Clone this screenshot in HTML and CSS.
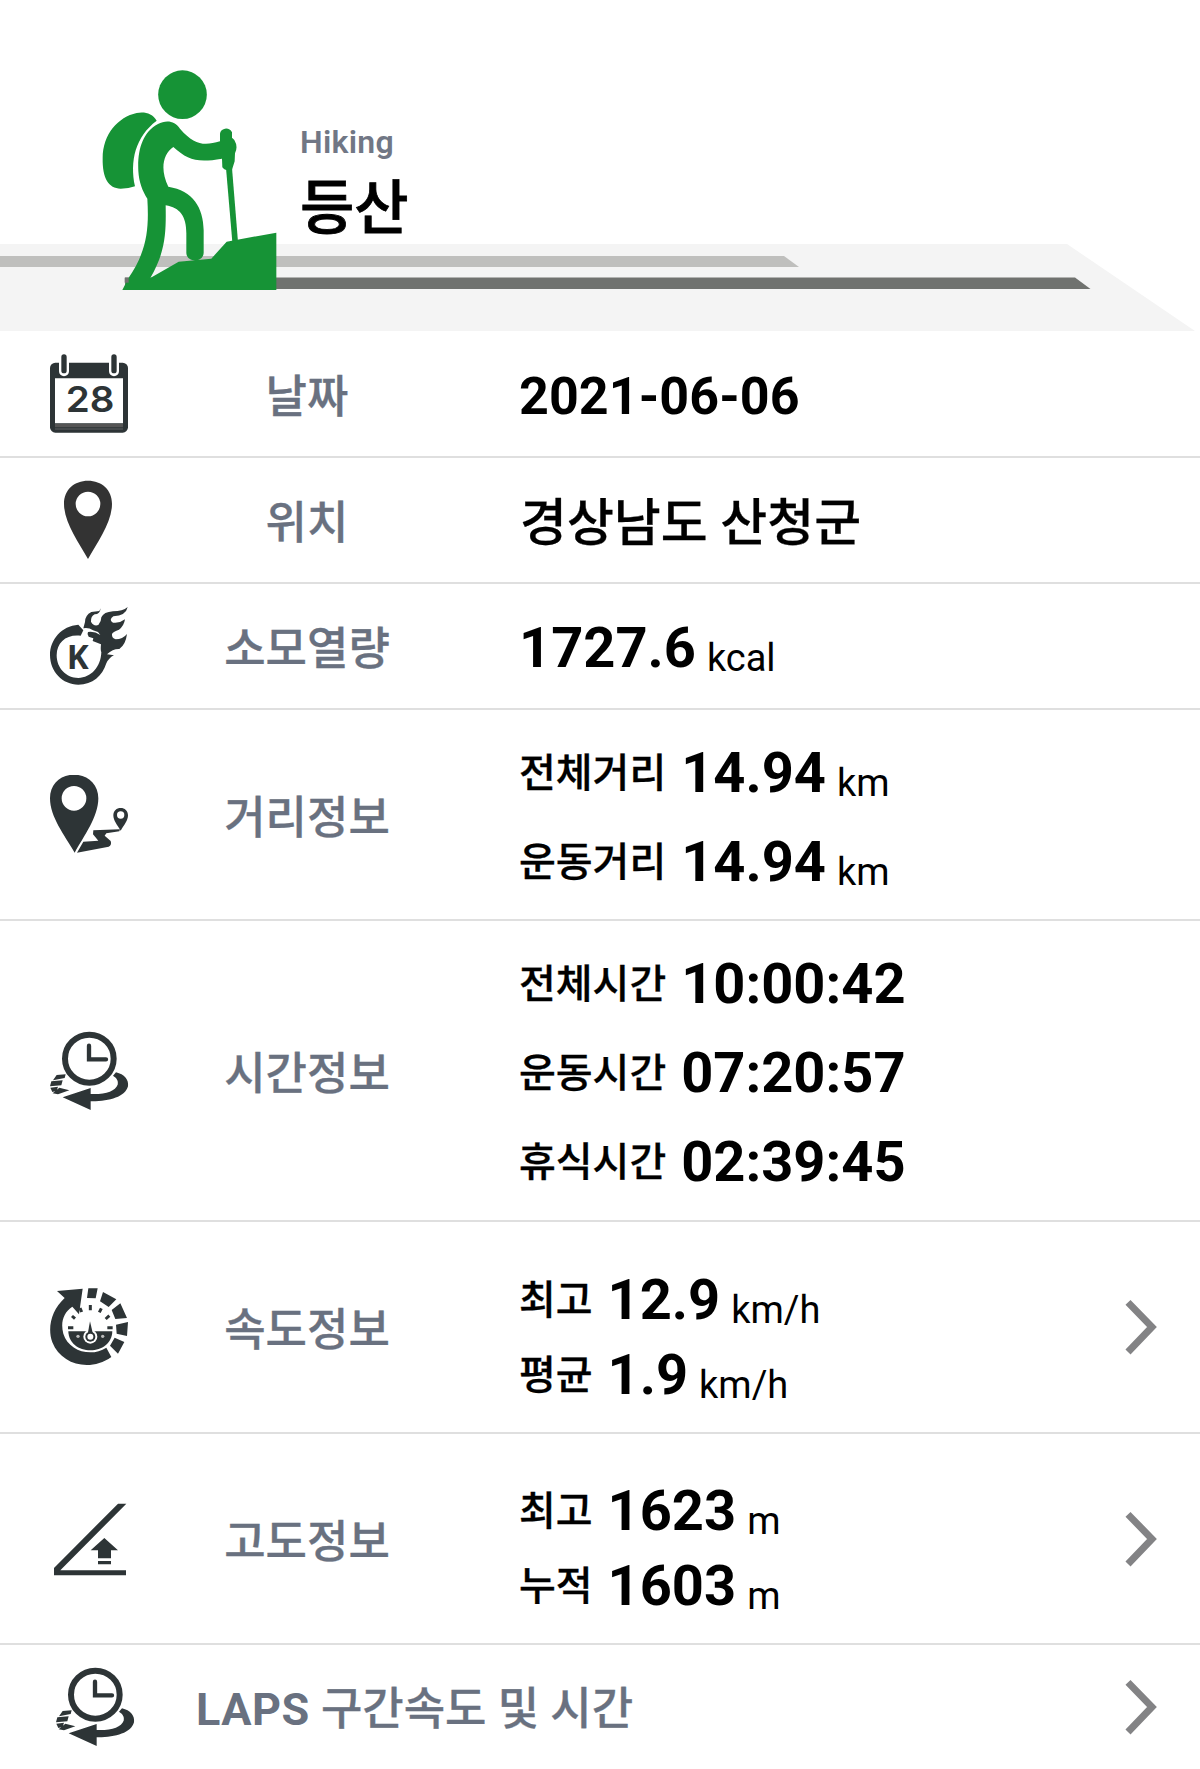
FILE: index.html
```html
<!DOCTYPE html>
<html lang="ko">
<head>
<meta charset="utf-8">
<title>등산 기록</title>
<link rel="stylesheet" href="styles.css">
</head>
<body>
<svg class="defs" width="0" height="0" aria-hidden="true">
  <symbol id="lap-clock" viewBox="60 60 240 240">
    <ellipse cx="178" cy="143" rx="73" ry="72" fill="none" stroke="#2d3436" stroke-width="18"/>
    <path d="M177 104V145H228" fill="none" stroke="#2d3436" stroke-width="13" stroke-linecap="round"/>
    <path d="M258 184C283 190 297 206 294 226C286 258 236 272 182 271V297L98 259L182 231V249C226 251 256 240 263 221C266 209 260 201 249 194Z" fill="#2d3436"/>
    <path d="M80 192L107 190L104 201L69 208ZM64 211L98 208L94 223L60 226ZM61 230L84 227L80 239L67 243ZM88 230L118 238L84 250L68 247Z" fill="#2d3436"/>
  </symbol>
  <symbol id="chevron" viewBox="70 50 110 180">
    <path d="M83 66L155 140L83 215" transform="translate(5 0)" fill="none" stroke="#838385" stroke-width="21"/>
  </symbol>
</svg>
<main class="record">
  <header class="hero">
    <svg class="scene" viewBox="0 0 1200 331">
      <path d="M0 244H1067L1195 331H0Z" fill="#f4f4f4"/>
      <path d="M0 256H784L799 267H0Z" fill="#bfbfbd"/>
      <path d="M125 277.500H1075L1090.500 289H125Z" fill="#70726f"/>
      <g transform="translate(80 50) scale(.33333)" fill="#169336">
        <circle cx="307.500" cy="134" r="73"/>
        <path d="M230 212C218 190 193 184 170 189C115 201 68 252 68 325C67 385 86 416 122 416Q147 416 165 409C149 333 166 260 230 212Z"/>
        <path d="M300 236C284 211 257 210 234 222C186 248 172 303 175 363C177 397 187 422 202 446C207 533 203 600 145 685L127 720H589V548L440 575L394 626L296 635L211 684C259 602 258 541 257 466C300 473 319 499 319 550V609C320 638 370 640 371 608V541C370 472 339 422 265 410C240 360 248 312 280 291C324 330 350 339 426 326L427 352Q436 365 456 359L464 334L465 310Q475 290 463 270L456 263V247Q449 234 435 236Q421 239 420 251V274C374 287 344 287 300 236Z"/>
        <path d="M438 354H456L474 576H457Z"/>
        <path d="M134 683H146V698H134Z" fill="#70726f"/>
      </g>
    </svg>
    <div class="titles">
      <div class="sport-en">Hiking</div>
      <h1 class="sport">등산</h1>
    </div>
  </header>

  <section class="row r-date">
    <svg class="icon" viewBox="60 42 240 240">
      <rect x="60" y="68" width="234" height="210" rx="16" fill="#2d3436"/>
      <path d="M75 115H279V250H75Z" fill="#fff"/>
      <path d="M75 252H279V262H75Z" fill="#555"/>
      <path d="M75 267H279" stroke="#777" stroke-width="2"/>
      <path d="M102 52V94M252 52V94" stroke="#fff" stroke-width="30" stroke-linecap="round"/>
      <path d="M102 51V92M252 51V92" stroke="#2d3436" stroke-width="16" stroke-linecap="round"/>
      <text class="cal-day" x="180" y="217" text-anchor="middle" textLength="146" lengthAdjust="spacingAndGlyphs">28</text>
    </svg>
    <div class="label">날짜</div>
    <div class="values"><div class="line date">2021-06-06</div></div>
  </section>

  <section class="row r-place">
    <svg class="icon" viewBox="60 420 240 240">
      <path fill-rule="evenodd" d="M174 657C145 605 102 548 102 491C102 449 133 422 174 422S246 449 246 491C246 548 203 605 174 657ZM174 455A37 37 0 1 0 174 529A37 37 0 1 0 174 455Z" fill="#333"/>
    </svg>
    <div class="label">위치</div>
    <div class="values"><div class="line place">경상남도 산청군</div></div>
  </section>

  <section class="row r-kcal">
    <svg class="icon" viewBox="60 48 240 240" fill="#2d3436">
      <path d="M145 104C95 108 60 148 60 195C60 245 98 284 145 284C188 284 217 258 229 220Q237 203 252 196L231 193Q249 176 268 177Q287 164 291 132Q278 148 257 148Q245 145 246 132Q250 124 267 119Q282 108 285 88Q268 101 249 98Q235 90 250 79Q288 77 293 51Q278 64 249 64Q221 66 214 82Q214 95 205 105Q191 110 183 95Q182 79 194 73Q210 73 212 55L208 63L184 66Q165 76 165 96L160 115Q176 112 189 121L204 126L211 135Q193 123 174 126Q170 133 176 140L190 145L188 153L213 163Q211 181 214 187C212 232 183 263 145 264C108 264 80 234 80 196C80 156 110 132 152 137L160 121Z"/>
      <text class="k-mark" x="143" y="236" text-anchor="middle" textLength="66" lengthAdjust="spacingAndGlyphs">K</text>
    </svg>
    <div class="label">소모열량</div>
    <div class="values"><div class="line kcal">1727.6<span class="unit">kcal</span></div></div>
  </section>

  <section class="row r-distance">
    <svg class="icon" viewBox="60 555 240 240" fill="#2d3436">
      <path fill-rule="evenodd" d="M134 788C104 736 60 681 60 625C60 582 92 554 132 554S205 582 205 625C205 681 162 738 134 788ZM132 588A37 37 0 1 0 132 662A37 37 0 1 0 132 588Z"/>
      <path fill-rule="evenodd" d="M272 722C262 705 250 692 250 676C250 662 260 654 272 654S294 662 294 676C294 692 282 705 272 722ZM272 664A11 11 0 1 0 272 686A11 11 0 1 0 272 664Z"/>
      <path d="M190 721L270 718L268 724L229 730L224 737L242 753Q246 765 236 770L141 788L160 755L205 752L189 733Z"/>
    </svg>
    <div class="label">거리정보</div>
    <div class="values">
      <div class="line"><span class="name">전체거리</span>14.94<span class="unit">km</span></div>
      <div class="line"><span class="name">운동거리</span>14.94<span class="unit">km</span></div>
    </div>
  </section>

  <section class="row r-time">
    <svg class="icon"><use href="#lap-clock"/></svg>
    <div class="label">시간정보</div>
    <div class="values">
      <div class="line"><span class="name">전체시간</span>10:00:42</div>
      <div class="line"><span class="name">운동시간</span>07:20:57</div>
      <div class="line"><span class="name">휴식시간</span>02:39:45</div>
    </div>
  </section>

  <section class="row r-speed">
    <svg class="icon" viewBox="60 50 240 240" fill="#2d3436">
      <path d="M81 62L158 55L147 132L127 109C100 126 91 157 100 190C116 242 183 262 229 232L244 260C180 306 94 284 67 216C51 171 65 119 104 83Z"/>
      <path d="M175 54L203 54L197 84L171 83ZM219 65L259 87L236 110L210 93ZM271 99L291 143L256 146L245 119ZM258 163L294 155L291 197L260 190ZM254 202L283 215L264 250L240 226Z"/>
      <path d="M115 183H247C246 219 216 240 181 240S116 219 115 183Z"/>
      <path d="M114 172H130M232 172H248M126 137L135 145M150 113L155 125M181 104V120M214 114L208 126M238 136L227 146" stroke="#2d3436" stroke-width="9"/>
      <circle cx="181" cy="199" r="21" fill="#fff"/>
      <circle cx="181" cy="199" r="15"/>
      <path d="M180 153L189 192H173Z"/>
      <circle cx="181" cy="199" r="9" fill="#fff"/>
      <circle cx="144" cy="198" r="5" fill="#bbb"/><circle cx="218" cy="198" r="5" fill="#bbb"/>
    </svg>
    <div class="label">속도정보</div>
    <div class="values">
      <div class="line"><span class="name">최고</span>12.9<span class="unit">km/h</span></div>
      <div class="line"><span class="name">평균</span>1.9<span class="unit">km/h</span></div>
    </div>
    <svg class="chevron"><use href="#chevron"/></svg>
  </section>

  <section class="row r-altitude">
    <svg class="icon" viewBox="60 55 240 240" fill="#2d3436">
      <path d="M264 69H289L91 269H288V284H72V262Z"/>
      <path d="M223 172L264 209H243V233H204V209H182ZM204 241H243V251H204Z"/>
    </svg>
    <div class="label">고도정보</div>
    <div class="values">
      <div class="line"><span class="name">최고</span>1623<span class="unit">m</span></div>
      <div class="line"><span class="name">누적</span>1603<span class="unit">m</span></div>
    </div>
    <svg class="chevron"><use href="#chevron"/></svg>
  </section>

  <section class="row r-laps">
    <svg class="icon"><use href="#lap-clock"/></svg>
    <div class="label"><span class="latin">LAPS</span> 구간속도 및 시간</div>
    <svg class="chevron"><use href="#chevron"/></svg>
  </section>
</main>
</body>
</html>
```
FILE: styles.css
```css
* { box-sizing: border-box; }

body {
  margin: 0;
  background: #fff;
  color: #000;
  font-family: Roboto, "Noto Sans CJK KR", sans-serif;
}

.defs { display: block; height: 0; }

.record {
  width: 1200px;
  height: 1769px;
  overflow: hidden;
}

.hero {
  display: grid;
  height: 331px;
}

.scene, .titles { grid-area: 1 / 1; }

.scene {
  width: 1200px;
  height: 331px;
}

.titles { padding: 122px 0 0 300px; }

.sport-en {
  color: #717785;
  font-size: 32px;
  font-weight: 600;
  letter-spacing: .3px;
  line-height: 40px;
}

.sport {
  margin: 0;
  font-size: 59px;
  font-weight: 500;
  line-height: 93px;
  -webkit-text-stroke: .8px currentColor;
}

.row {
  display: grid;
  grid-template-columns: 178px 258px 82px 1fr 78px;
  align-items: center;
  border-bottom: 2px solid #dfdfdf;
}

.r-date { height: 127px; }
.r-place { height: 126px; }
.r-kcal { height: 126px; }
.r-distance { height: 211px; }
.r-time { height: 301px; }
.r-speed { height: 212px; }
.r-altitude { height: 211px; }
.r-laps { height: 124px; border-bottom: 0; }

.icon {
  width: 80px;
  height: 80px;
  margin-left: 50px;
}

.label {
  padding-top: 8px;
  color: #697180;
  font-size: 45px;
  font-weight: 500;
  line-height: 60px;
  text-align: center;
  white-space: nowrap;
  -webkit-text-stroke: .3px currentColor;
}

.values {
  grid-column: 4;
  padding-top: 6px;
}

.line {
  font-size: 56px;
  font-weight: 700;
  line-height: 89px;
  white-space: nowrap;
}

.line.date {
  padding-left: 1px;
  font-size: 52px;
  letter-spacing: .1px;
}

.line.kcal { padding-left: 1px; }
.r-kcal .values { padding-top: 4px; }

.line.place {
  padding-left: 2px;
  font-size: 51px;
  font-weight: 500;
  -webkit-text-stroke: .3px currentColor;
}

.name {
  margin-right: 15px;
  padding-left: 1px;
  font-size: 40px;
  font-weight: 500;
  line-height: 0;
  vertical-align: 5px;
  -webkit-text-stroke: .3px currentColor;
}

.unit {
  margin-left: 11px;
  font-size: 38px;
  font-weight: 400;
  line-height: 0;
  vertical-align: -4px;
}

.r-speed .values, .r-altitude .values { padding-top: 21px; }
.r-speed .line, .r-altitude .line { line-height: 75px; }

.chevron {
  grid-column: 5;
  width: 36.667px;
  height: 60px;
}

.r-laps { grid-template-columns: 196px 926px 78px; }
.r-laps .icon { margin-left: 56px; }
.r-laps .label { padding-top: 6px; text-align: left; }
.r-laps .chevron { grid-column: 3; }

.latin {
  font-weight: 700;
  letter-spacing: .5px;
  -webkit-text-stroke: 0;
}

.cal-day {
  fill: #2d3436;
  font-family: Inter, sans-serif;
  font-size: 108px;
  font-weight: 600;
}

.k-mark {
  font-family: "Open Sans", sans-serif;
  font-size: 100px;
  font-weight: 700;
}
```
